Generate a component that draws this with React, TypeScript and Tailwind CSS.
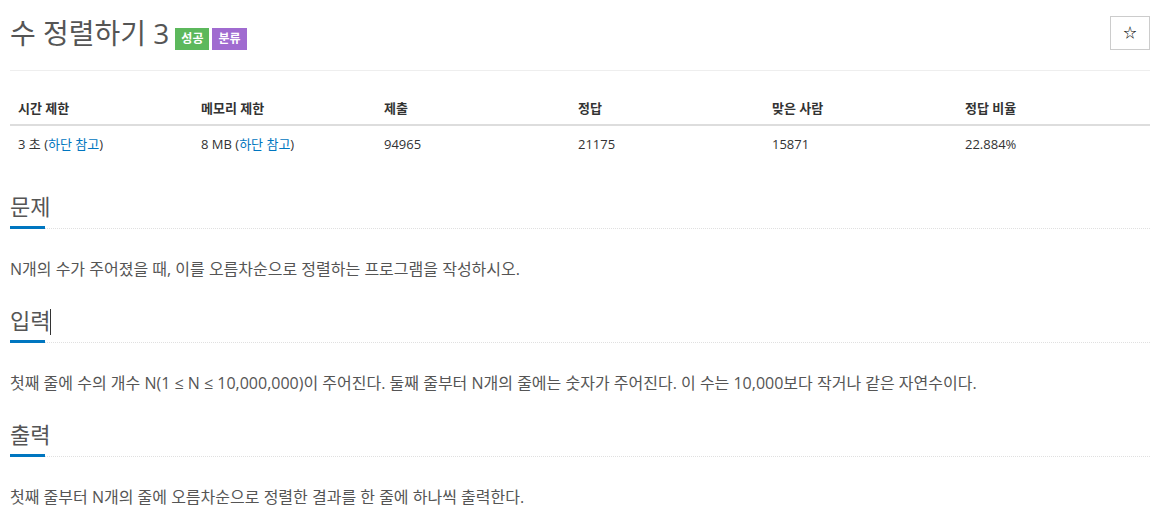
const font = { fontFamily: '"Open Sans", "Noto Sans CJK KR", sans-serif' };

type Stat = { label: string; value: React.ReactNode };

const stats: Stat[] = [
  {
    label: "시간 제한",
    value: (
      <>
        3 초 (<span className="text-[#0076c0]">하단 참고</span>)
      </>
    ),
  },
  {
    label: "메모리 제한",
    value: (
      <>
        8 MB (<span className="text-[#0076c0]">하단 참고</span>)
      </>
    ),
  },
  { label: "제출", value: "94965" },
  { label: "정답", value: "21175" },
  { label: "맞은 사람", value: "15871" },
  { label: "정답 비율", value: "22.884%" },
];

const colWidths = ["w-[183px]", "w-[183px]", "w-[194px]", "w-[194px]", "w-[193px]", ""];

function Section({
  title,
  text,
  cursor,
}: {
  title: string;
  text: string;
  cursor?: boolean;
}) {
  return (
    <section className="pt-[24px]">
      {/* HEADER */}
      <div className="relative border-b border-dotted border-[#e0e0e0]">
        <h2 className="text-[22px] leading-[30px] text-[#555] pb-[7px]">
          {title}
          {cursor && (
            <span className="inline-block w-px h-[26px] bg-[#333] align-[-6px]" />
          )}
        </h2>
        <div className="absolute left-0 -bottom-px h-[3px] w-[35px] bg-[#0076c0]" />
      </div>

      <p className="mt-[28px] text-[16px] leading-[24px] text-[#555]">{text}</p>
    </section>
  );
}

export default function App() {
  return (
    <div className="bg-white min-h-[532px] pl-[10px]" style={font}>
      <div className="w-[1140px] text-[#333]">
        {/* TITLE */}
        <div className="flex items-center justify-between pt-[16px] pb-[20px] border-b border-[#eee]">
          <div className="flex items-end gap-[3px] h-[34px]">
            <h1 className="text-[28px] leading-[34px] text-[#555] mr-[3px]">수 정렬하기 3</h1>
            <span className="bg-[#5cb85c] text-white text-[12px] font-bold px-[6px] h-[22px] leading-[22px]">
              성공
            </span>
            <span className="bg-[#a06bd0] text-white text-[12px] font-bold px-[6px] h-[22px] leading-[22px]">
              분류
            </span>
          </div>
          <button className="w-[40px] h-[34px] border border-[#ccc] flex items-center justify-center text-[13px] text-black">
            ☆
          </button>
        </div>

        {/* TABLE */}
        <div className="pt-[28px] pb-[13px]">
          <table className="w-full border-collapse text-[13px]">
            <thead>
              <tr>
                {stats.map((s, i) => (
                  <th
                    key={s.label}
                    className={`text-left font-bold px-[8px] pb-[5px] border-b-2 border-[#ddd] ${colWidths[i]}`}
                  >
                    {s.label}
                  </th>
                ))}
              </tr>
            </thead>
            <tbody>
              <tr>
                {stats.map((s) => (
                  <td key={s.label} className="px-[8px] pt-[9px]">
                    {s.value}
                  </td>
                ))}
              </tr>
            </tbody>
          </table>
        </div>

        <Section
          title="문제"
          text="N개의 수가 주어졌을 때, 이를 오름차순으로 정렬하는 프로그램을 작성하시오."
        />
        <Section
          title="입력"
          cursor
          text="첫째 줄에 수의 개수 N(1 ≤ N ≤ 10,000,000)이 주어진다. 둘째 줄부터 N개의 줄에는 숫자가 주어진다. 이 수는 10,000보다 작거나 같은 자연수이다."
        />
        <Section
          title="출력"
          text="첫째 줄부터 N개의 줄에 오름차순으로 정렬한 결과를 한 줄에 하나씩 출력한다."
        />
      </div>
    </div>
  );
}
